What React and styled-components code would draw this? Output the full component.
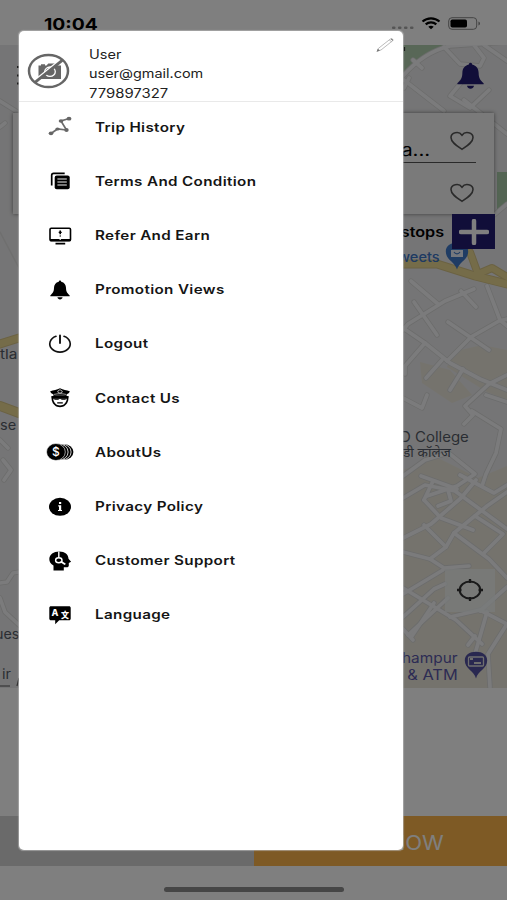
import React from "react";
import styled, { createGlobalStyle } from "styled-components";

const GlobalStyle = createGlobalStyle`
  * { box-sizing: border-box; }
  body { margin: 0; background: #fff; font-family: Inter, "Noto Sans", sans-serif; }
  svg { display: block; flex: none; }
`;

const Screen = styled.div`
  position: relative;
  width: 507px;
  height: 900px;
  overflow: hidden;
  display: flex;
  flex-direction: column;
  background: #fff;
`;

const WideText = styled.span`
  display: inline-block;
  white-space: nowrap;
  transform: scaleX(${(p) => p.$x || 1});
  transform-origin: ${(p) => p.$origin || "left"} center;
`;

/* ---------- Status bar ---------- */

const StatusBar = styled.div`
  height: 45px;
  flex: none;
  display: flex;
  justify-content: space-between;
  padding: 14px 26px 0 44px;
`;

const Clock = styled.div`
  font-size: 16.5px;
  font-weight: 650;
  line-height: 20px;
  color: #000;
`;

const StatusIcons = styled.div`
  display: flex;
  align-items: flex-start;
`;

/* ---------- Map ---------- */

const MapArea = styled.div`
  position: relative;
  height: 643px;
  flex: none;
  display: flex;
  flex-direction: column;
  background: #ebebec;
`;

const MapCanvas = styled.svg`
  position: absolute;
  inset: 0;
`;

const MapLabel = styled.div`
  position: absolute;
  left: ${(p) => p.$left}px;
  top: ${(p) => p.$top}px;
  font-size: ${(p) => p.$size || 14}px;
  line-height: 17px;
  font-weight: ${(p) => p.$weight || 400};
  color: ${(p) => p.$color || "#555b66"};
  white-space: pre;
`;

const MapPin = styled.div`
  position: absolute;
  left: ${(p) => p.$left}px;
  top: ${(p) => p.$top}px;
`;

const TopBar = styled.div`
  position: relative;
  height: 68px;
  flex: none;
  display: flex;
  justify-content: space-between;
  padding: 17px 22px 0 17px;
`;

const AddressCard = styled.div`
  position: relative;
  height: 101px;
  flex: none;
  margin: 0 13px;
  padding: 0 18px;
  background: #f5f5f5;
  box-shadow: 0 0 4px rgba(0, 0, 0, 0.5);
`;

const AddressRow = styled.div`
  height: ${(p) => p.$h}px;
  display: flex;
  justify-content: flex-end;
  padding: ${(p) => p.$pt}px 2px 0 0;
  border-bottom: ${(p) => (p.$line ? "1.5px solid #555" : "none")};
`;

const AddressText = styled.div`
  font-size: 17px;
  line-height: 20px;
  color: #000;
  margin: 9px 20px 0 0;
`;

const StopsRow = styled.div`
  position: relative;
  height: 35px;
  flex: none;
  display: flex;
  align-items: center;
  justify-content: flex-end;
  gap: 8px;
  padding-right: 12px;
  font-size: 13.5px;
  font-weight: 600;
  color: #000;
`;

const AddStop = styled.div`
  width: 43px;
  height: 35px;
  display: flex;
  align-items: center;
  justify-content: center;
  background: #221c72;
`;

const LocateButton = styled.div`
  position: relative;
  width: 50px;
  height: 43px;
  margin: auto 12px 76.5px auto;
  display: flex;
  align-items: center;
  justify-content: center;
  background: rgba(242, 245, 246, 0.75);
`;

/* ---------- Bottom ---------- */

const Sheet = styled.div`
  height: 128px;
  flex: none;
`;

const ActionBar = styled.div`
  height: 50px;
  flex: none;
  display: grid;
  grid-template-columns: 254px 253px;
`;

const Action = styled.div`
  display: flex;
  align-items: center;
  justify-content: flex-end;
  padding: 3px 63px 0 0;
  background: ${(p) => p.$bg};
  color: #fff;
  font-size: 19.5px;
  font-weight: 400;
`;

const HomeArea = styled.div`
  flex: 1;
  display: flex;
  justify-content: center;
  padding-top: 21px;
`;

const HomeIndicator = styled.div`
  width: 180px;
  height: 5px;
  border-radius: 3px;
  background: #8c8c8c;
`;

/* ---------- Drawer ---------- */

const Dimmer = styled.div`
  position: absolute;
  inset: 0;
  background: rgba(0, 0, 0, 0.5);
`;

const Drawer = styled.aside`
  position: absolute;
  left: 19px;
  top: 31px;
  width: 384px;
  height: 819px;
  border-radius: 5px;
  background: #fff;
  box-shadow: 0 0 1px 0.5px rgba(190, 190, 190, 0.6);
`;

const Profile = styled.header`
  height: 71px;
  display: flex;
  align-items: flex-start;
  padding: 0 8px 0 8px;
  border-bottom: 1.5px solid #e9e9e9;
`;

const Avatar = styled.div`
  width: 43px;
  padding-top: 22px;
`;

const Details = styled.div`
  flex: 1;
  padding: 14px 0 0 19px;
  font-size: 12.5px;
  line-height: 19.4px;
  color: #222;
`;

const Detail = styled.div`
  height: 19.4px;
`;

const EditButton = styled.div`
  padding-top: 5px;
`;

const Menu = styled.nav`
  display: flex;
  flex-direction: column;
  gap: 8.2px;
  padding-top: 2.2px;
`;

const MenuItem = styled.div`
  height: 46px;
  display: flex;
  align-items: center;
  gap: 21.4px;
  padding-left: 26.5px;
  font-size: 12.8px;
  font-weight: 600;
  letter-spacing: 0.3px;
  color: #151515;
`;

/* ---------- Icons ---------- */

const Glyph = ({ children }) => (
  <svg width="28" height="22" viewBox="0 0 28 22" fill="#000">{children}</svg>
);

const BellShape = () => (
  <>
    <path d="M14 1.6c.8 0 1.2.6 1.2 1.2 3.200.8 4.700 3 4.800 6 .1 3.700.8 5 3.700 7.600v.8H4.300v-.8C7.200 13.800 7.900 12.500 8 8.800c.1-3 1.600-5.200 4.800-6 0-.6.4-1.200 1.200-1.200z" />
    <path d="M11.400 18.300h5.200c-.3 1.400-1.300 2.100-2.600 2.100s-2.300-.7-2.600-2.100z" />
  </>
);

const TripIcon = () => (
  <Glyph>
    <path d="M5 17.500 11.500 13l9 1L15 5l8-2.500" fill="none" stroke="#6c6c6c" strokeWidth="1.700" />
    <g fill="#666">
      <ellipse cx="5" cy="17.300" rx="2.300" ry="1.900" />
      <ellipse cx="11.500" cy="13" rx="2.200" ry="1.600" />
      <ellipse cx="20.500" cy="14" rx="2.200" ry="1.900" />
      <ellipse cx="15" cy="5" rx="2.300" ry="1.800" />
      <ellipse cx="23" cy="2.700" rx="2.400" ry="1.900" />
    </g>
  </Glyph>
);

const TermsIcon = () => (
  <Glyph>
    <path d="M5.700 15.500V5.300c0-1.200.8-1.900 2-1.900h11" fill="none" stroke="#000" strokeWidth="1.700" />
    <rect x="8.700" y="5.400" width="15" height="13.900" rx="2" />
    <path d="M11.400 9h9.400M11.400 12h9.400M11.400 15h9.400" stroke="#eee" strokeWidth="1.100" />
  </Glyph>
);

const ReferIcon = () => (
  <Glyph>
    <rect x="4" y="3.200" width="20.500" height="12.400" rx="1.200" fill="none" stroke="#000" strokeWidth="1.600" />
    <path d="M4 14h20.500v2.200H4z" />
    <path d="M13.400 5.600h1.600v3.600h-1.600zM13.700 10.200h1v1.500h-1zM12.700 6.800h3v1.200h-3zM9.500 17.800h9.700v1.600H9.500z" />
    <path d="M13.500 13.800h1.500v1h-1.500z" fill="#fff" />
  </Glyph>
);

const PromotionIcon = () => <Glyph><BellShape /></Glyph>;

const LogoutIcon = () => (
  <Glyph>
    <g fill="none" stroke="#111" strokeLinecap="round">
      <path d="M10 3.200A10.200 8.300 0 1 0 18 3.200" strokeWidth="1.600" />
      <path d="M14 2.400v7.600" strokeWidth="1.900" />
    </g>
  </Glyph>
);

const OfficerIcon = () => (
  <Glyph>
    <path d="M14 1.200c3.200 1.500 6.500 2 9.800 3-.3 1.500-1.600 2.500-3.300 3.200v1.500c-4.300-1-8.700-1-13 0V7.400C5.800 6.700 4.500 5.700 4.200 4.200c3.300-1 6.600-1.500 9.800-3z" />
    <path d="M5.200 9.300c5.800-1.500 11.800-1.500 17.600 0l-.6 4c-.9 4.400-4.200 6.900-8.200 6.900s-7.300-2.500-8.200-6.900z" />
    <path d="M7.200 11.600h13.600c-.2 4.200-3.200 7-6.800 7s-6.600-2.800-6.800-7z" fill="#fff" />
    <path d="M7.200 11.200h13.600v.8l-2 .8h-3l-1.200-.7h-1.200l-1.200.7h-3l-2-.8zM11.200 15.300h5.600v1.200h-5.600z" />
    <path d="m14 2.700 2.300 1.500L15.500 6h-3l-.8-1.800z" fill="none" stroke="#fff" strokeWidth=".7" />
    <path d="M8 7.400c4-.9 8-.9 12 0" fill="none" stroke="#fff" strokeWidth=".6" />
  </Glyph>
);

const CoinText = styled.text`
  font-family: Inter, sans-serif;
  font-size: 12px;
  font-weight: 500;
  letter-spacing: 0;
  text-anchor: middle;
  fill: #fff;
`;

const CoinsIcon = () => (
  <Glyph>
    <ellipse cx="18.200" cy="11" rx="9.200" ry="7.800" />
    <ellipse cx="15.900" cy="11" rx="9.200" ry="8" stroke="#fff" strokeWidth=".8" />
    <ellipse cx="12.900" cy="11" rx="9.200" ry="8.200" stroke="#fff" strokeWidth=".8" />
    <ellipse cx="9.900" cy="11" rx="9.400" ry="8.500" stroke="#fff" strokeWidth=".6" />
    <CoinText x="9.900" y="15.300">$</CoinText>
  </Glyph>
);

const InfoIcon = () => (
  <Glyph>
    <ellipse cx="14" cy="10.800" rx="11" ry="9" />
    <path d="M13 6h2.200v1.900H13zM12.200 9.300h3v4.600h.8v1.200h-4v-1.200h1v-3.400h-.8z" fill="#fff" />
  </Glyph>
);

const SupportIcon = () => (
  <Glyph>
    <path d="M7.500 20.600v-5C4.700 13.800 3.300 12 3.300 9c0-4.600 4.300-7.600 10-7.600 5.700 0 9 3 9.200 7.300l2.600 3.100-2.300 1.200v2.500c0 1-.8 1.800-2 1.800h-3v3.300z" />
    <g fill="none" stroke="#fff" strokeWidth="1.400">
      <path d="M12.800 1.400v6" />
      <ellipse cx="12.800" cy="10.200" rx="3.200" ry="2.500" />
    </g>
    <path d="m15.300 10.800 4.600 2.900-1.200 1.400-4.600-2.800z" fill="#fff" />
  </Glyph>
);

const LangText = styled.text`
  font-family: Inter, "Noto Sans CJK SC", sans-serif;
  font-size: ${(p) => p.$size}px;
  font-weight: 800;
  letter-spacing: 0;
  text-anchor: middle;
  fill: #fff;
`;

const LanguageIcon = () => (
  <Glyph>
    <path d="M5 2.300h18c1 0 1.700.6 1.700 1.500v11c0 .9-.7 1.500-1.700 1.500h-9.800l-4 4v-4H5c-1 0-1.700-.6-1.700-1.500v-11c0-.9.700-1.500 1.700-1.500z" />
    <LangText x="8.900" y="11.600" $size={9}>A</LangText>
    <LangText x="19" y="13.600" $size={8}>文</LangText>
  </Glyph>
);

const NoPhotoIcon = () => (
  <svg width="43" height="36" viewBox="0 0 43 36">
    <path d="M11.500 12.500H14v-1.300h4v1.300h1.500l1.800-2h7l1.700 2h4V26H11.500z" fill="#666" />
    <ellipse cx="23" cy="18.700" rx="5.300" ry="4.700" fill="none" stroke="#fff" strokeWidth="1.300" />
    <path d="M20.500 18.500c0-1.500 1-2.300 2.500-2.300" fill="none" stroke="#fff" strokeWidth="1" />
    <path d="M7 28 34 6.200" stroke="#fff" strokeWidth="2" />
    <path d="M8 29.300 35.200 7.300" stroke="#666" strokeWidth="2.800" />
    <ellipse cx="21.500" cy="18" rx="19.500" ry="16.100" fill="none" stroke="#666" strokeWidth="2.500" />
  </svg>
);

const PencilIcon = () => (
  <svg width="19" height="18" viewBox="0 0 19 18" fill="none" stroke="#aaa" strokeWidth=".8">
    <path d="m1.500 15 1-2.700L14.500 2.900c1-.8 3.300.7 2.400 1.600L5 14z" />
    <path d="m13.300 4.100 2.400 1.700" />
    <path d="m1.500 15 .5-1.300.9.7zM15 2.900l2 1.500" stroke="#777" strokeWidth="1.100" />
  </svg>
);

const HeartIcon = () => (
  <svg width="24" height="20" viewBox="0 0 24 20" fill="none" stroke="#555" strokeWidth="1.600">
    <path d="M12 18.300C7 15 1 11.400 1 6.500 1 1.800 8.600-.6 12 4.200 15.400-.6 23 1.800 23 6.500c0 4.900-6 8.500-11 11.800z" />
  </svg>
);

const StatusGlyphs = () => (
  <svg width="92" height="20" viewBox="0 0 92 20">
    <g fill="#aaa">
      <rect x="3" y="12.500" width="3.500" height="2.500" rx="1" />
      <rect x="9" y="12.500" width="3.500" height="2.500" rx="1" />
      <rect x="15" y="12.500" width="3.500" height="2.500" rx="1" />
      <rect x="21" y="12.500" width="3.500" height="2.500" rx="1" />
    </g>
    <g fill="none" stroke="#000" strokeWidth="2.200">
      <path d="M33.500 7.500c4.800-4.300 12.200-4.300 17 0" />
      <path d="M36.700 10.400c3-2.700 7.600-2.700 10.600 0" />
    </g>
    <path d="M39.300 12.700c1.600-1.300 3.800-1.300 5.400 0L42 15.200z" />
    <rect x="59.700" y="3.700" width="28" height="11.600" rx="3.300" fill="none" stroke="#888" />
    <rect x="61.500" y="5.500" width="16.500" height="8" rx="1.800" />
    <path d="M89.500 7.500c1.900.7 1.900 3.300 0 4z" fill="#777" />
  </svg>
);

const roads = [
  "M403 76Q424 52 450 46L507 42", "M444 47l16 17 20 2 4-8-10-13", "M484 45l23 16", "M413 60l9 8",
  "M404 80l18 14 22 17", "M404 88l5-10", "M489 90l-19 18-20-12 14-17", "M464 100l43 34", "M494 215l13-11",
  "M411 281l27 23", "M474 289l-29 12-37 23-5 6", "M461 291l15 16", "M414 302l23 33", "M403 328l22 15 25 20 30 16 27 11",
  "M447 361l24-24 28-16 8-2", "M448 322l41 28", "M425 343l-20 23v8", "M487 286l13 34 7 6", "M442 360l-16 18",
  "M463 369l-13 21", "M507 375l-18 9-24 22 8 9-9 9", "M486 395l21 7", "M472 411l29 18-5 24-10 21-4 12",
  "M403 398l19 10 5-13", "M403 476l22-16 23-7", "M450 454l25 20-18 12-30 10", "M421 476l36 13", "M460 475l34 18 13-8",
  "M403 538l28-14 30-26 15-18", "M403 498l22-13 30 6 52 38", "M424 500l17 18 32 12", "M424 500l9-19", "M438 506l13-5-3-11",
  "M424 525l22 22-16 12-27-7", "M446 547l8-14 33-27 20-14", "M454 533l35 26 18 19", "M475 516l28 18-20 20", "M430 559l14 9 25-2",
  "M403 588l53 32 26 24", "M403 594l40-24", "M403 617l31-28 11-5", "M408 635l40-37", "M413 640l-10-11", "M434 603l-22 33",
  "M450 617l30-7 27 14", "M480 611l27-24", "M475 654l12-42", "M468 645l7-9", "M507 624l-19 30 2 33",
  "M0 101l19 12", "M0 127l5-4", "M0 440l8 8", "M3 460l8 10-7 10", "M0 583l7-1 6-9 6-1", "M0 598l5 14 14 13",
];

const tanBlocks = [
  "M452 352l30-7 25 5v50l-20-8-40-25z", "M420 362l30 8 22 25-20 8-30-20z", "M403 470l35-12 40 20 29-12v222H403z",
];

const MapDrawing = () => (
  <MapCanvas width="507" height="643" viewBox="0 45 507 643">
    <path d="M403 45h57q-31 6-57 31z" fill="#b0cfae" />
    <path d="M497 172h10v34l-10 4z" fill="#a9cba8" />
    <g fill="#eae7db">{tanBlocks.map((d) => <path key={d} d={d} />)}</g>
    <g fill="none" strokeLinejoin="round" strokeLinecap="round">
      <path d="M0 232l19 36" stroke="#dedede" strokeWidth="1.500" />
      <g stroke="#d8d8d8" strokeWidth="5.300">{roads.map((d) => <path key={d} d={d} />)}</g>
      <g stroke="#f6f7f8" strokeWidth="3.700">{roads.map((d) => <path key={d} d={d} />)}</g>
      <g stroke="#d6c486">
        <path d="M403 264h34l38 12 32 8" strokeWidth="9" />
        <path d="M470 252l8 22 14-6 15 9" strokeWidth="8" />
        <path d="M0 344l19-6" strokeWidth="9" />
        <path d="M0 406l19 7" strokeWidth="10" />
      </g>
      <g stroke="#ebd993">
        <path d="M403 264h34l38 12 32 8" strokeWidth="7" />
        <path d="M470 252l8 22 14-6 15 9" strokeWidth="6" />
        <path d="M0 344l19-6" strokeWidth="7" />
        <path d="M0 406l19 7" strokeWidth="8" />
      </g>
    </g>
    <path d="M0 686h10M17 686l2-8" stroke="#555" strokeWidth="1.200" />
    <path d="M404.500 47v4" stroke="#222" strokeWidth="1.200" />
  </MapCanvas>
);

const PinShape = ({ color, children }) => (
  <svg width="24" height="28" viewBox="0 0 24 28">
    <path d="M12 27.500C10 20 .8 17.800.8 9.600.8 4 5.600.8 12 .8S23.200 4 23.200 9.600C23.200 17.800 14 20 12 27.500z" fill={color} />
    {children}
  </svg>
);

const menu = [
  ["Trip History", TripIcon],
  ["Terms And Condition", TermsIcon],
  ["Refer And Earn", ReferIcon],
  ["Promotion Views", PromotionIcon],
  ["Logout", LogoutIcon],
  ["Contact Us", OfficerIcon],
  ["AboutUs", CoinsIcon],
  ["Privacy Policy", InfoIcon],
  ["Customer Support", SupportIcon],
  ["Language", LanguageIcon],
];

export default function App() {
  return (
    <Screen>
      <GlobalStyle />
      <StatusBar>
        <Clock><WideText $x={1.17}>10:04</WideText></Clock>
        <StatusIcons><StatusGlyphs /></StatusIcons>
      </StatusBar>

      <MapArea>
        <MapDrawing />
        <MapLabel $left={398} $top={204} $size={13} $color="#3d74c4" $weight={500}><WideText $x={1.12}>weets</WideText></MapLabel>
        <MapPin $left={445} $top={197}>
          <PinShape color="#3f78c8">
            <path d="M6 8h12v7H6z" fill="#e8eefa" />
            <path d="M9 10c1.500 2.500 4.500 2.500 6 0" fill="none" stroke="#3f78c8" strokeWidth="1.200" />
          </PinShape>
        </MapPin>
        <MapLabel $left={400} $top={383}><WideText $x={1.07}>D College</WideText></MapLabel>
        <MapLabel $left={403} $top={399} $size={12}><WideText $x={1.13}>डी कॉलेज</WideText></MapLabel>
        <MapLabel $left={402} $top={604} $color="#5b57a8"><WideText $x={1.1}>hampur</WideText></MapLabel>
        <MapLabel $left={393} $top={621} $color="#5b57a8"><WideText $x={1.17}>n &amp; ATM</WideText></MapLabel>
        <MapPin $left={464} $top={606}>
          <PinShape color="#5350a0">
            <rect x="4.500" y="6" width="15" height="9" rx="1" fill="none" stroke="#ddd" strokeWidth="1.300" />
            <path d="M6 8h3M10 12h7" stroke="#ddd" strokeWidth="2" />
          </PinShape>
        </MapPin>
        <MapLabel $left={0} $top={301} $size={13}><WideText $x={1.18}>tla</WideText></MapLabel>
        <MapLabel $left={0} $top={372} $size={13}><WideText $x={1.12}>se</WideText></MapLabel>
        <MapLabel $left={-5} $top={581} $size={13}><WideText $x={1.1}>ues</WideText></MapLabel>
        <MapLabel $left={2} $top={621} $size={13}><WideText $x={1.12}>ir</WideText></MapLabel>

        <TopBar>
          <svg width="26" height="30" viewBox="0 0 26 30">
            <path d="M0 5h24M0 13.500h24M0 21.500h24" stroke="#222" strokeWidth="1.800" />
          </svg>
          <svg width="29" height="28" viewBox="3.300 1 21.400 20.400" preserveAspectRatio="none" fill="#221c72"><BellShape /></svg>
        </TopBar>
        <AddressCard>
          <AddressRow $h={50} $pt={18} $line>
            <AddressText><WideText $x={1.2} $origin="right">a...</WideText></AddressText>
            <HeartIcon />
          </AddressRow>
          <AddressRow $h={50} $pt={20}><HeartIcon /></AddressRow>
        </AddressCard>
        <StopsRow>
          <WideText $x={1.2} $origin="right">stops</WideText>
          <AddStop>
            <svg width="30" height="26" viewBox="0 0 30 26">
              <path d="M15 2v22M2 13h26" stroke="#fff" strokeWidth="4.500" strokeLinecap="round" />
            </svg>
          </AddStop>
        </StopsRow>
        <LocateButton>
          <svg width="28" height="24" viewBox="0 0 28 24" fill="none" stroke="#333" strokeWidth="2">
            <ellipse cx="14" cy="12" rx="10.300" ry="8.600" />
            <path d="M14 1v4M14 19v4M1 12h4.500M22.500 12H27" strokeWidth="2.300" />
          </svg>
        </LocateButton>
      </MapArea>

      <Sheet />
      <ActionBar>
        <Action $bg="#d4d4d4" />
        <Action $bg="#fcb44a"><WideText $x={1.13} $origin="right">NOW</WideText></Action>
      </ActionBar>
      <HomeArea><HomeIndicator /></HomeArea>

      <Dimmer />
      <Drawer>
        <Profile>
          <Avatar><NoPhotoIcon /></Avatar>
          <Details>
            <Detail><WideText $x={1.16}>User</WideText></Detail>
            <Detail><WideText $x={1.155}>user@gmail.com</WideText></Detail>
            <Detail><WideText $x={1.19}>779897327</WideText></Detail>
          </Details>
          <EditButton><PencilIcon /></EditButton>
        </Profile>
        <Menu>
          {menu.map(([label, Icon]) => (
            <MenuItem key={label}>
              <Icon />
              <WideText $x={1.187}>{label}</WideText>
            </MenuItem>
          ))}
        </Menu>
      </Drawer>
    </Screen>
  );
}
